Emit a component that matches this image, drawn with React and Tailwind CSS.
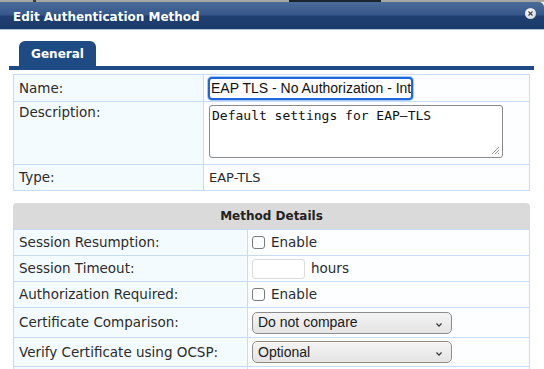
import React from "react";

function Checkbox() {
  return <span className="inline-block w-[13px] h-[13px] border border-[#7a7a7a] rounded-[3px] bg-white" />;
}

function Chevron() {
  return (
    <svg width="8" height="6" viewBox="0 0 8 6" className="absolute right-[8px] top-[9px]">
      <path d="M1.5 1.5 L4 4.2 L6.5 1.5" fill="none" stroke="#333" strokeWidth="1.2" />
    </svg>
  );
}

function Select({ value }) {
  return (
    <div className="relative w-[200px] h-[22px] rounded-[5px] border border-[#8d8d8d] bg-[linear-gradient(to_bottom,#f4f4f4,#e4e4e4)] flex items-center pl-[5px] font-['Liberation_Sans',sans-serif] text-[14px] text-[#1a1a1a]">
      {value}
      <Chevron />
    </div>
  );
}

function MRow({ label, h, last, children }) {
  return (
    <div className={`flex ${h} ${last ? "" : "border-b"} border-[#c6dcf5]`}>
      <div className="w-[234px] shrink-0 border-r border-[#c6dcf5] bg-[#f4fbff] flex items-center pl-[5px]">{label}</div>
      <div className="flex-1 bg-[#fcfeff] flex items-center pl-[4px] gap-[6px]">{children}</div>
    </div>
  );
}

export default function App() {
  return (
    <div className="w-[544px] h-[369px] overflow-hidden bg-white font-['DejaVu_Sans',sans-serif] text-[13.5px] text-[#2b2b2b]">
      <div className="h-[2px] bg-[#a6a6a6] flex">
        <div className="ml-[33px] w-[3px] bg-[#3a3a3a]" />
        <div className="ml-[253px] w-[92px] bg-[#1b2532]" />
      </div>
      <div className="relative h-[27px] rounded-tr-[5px] flex items-center pl-[13px] pt-[3px] bg-[linear-gradient(to_bottom,#4b6b98_0%,#35578a_48%,#1e3f70_52%,#1b3b6a_100%)]">
        <span className="text-white font-bold text-[12px] leading-none">Edit Authentication Method</span>
        <span className="absolute left-[525px] top-[6px] w-[11px] h-[11px] rounded-full bg-[radial-gradient(circle_at_40%_35%,#ffffff,#c9ced6)] flex items-center justify-center">
          <svg width="5" height="5" viewBox="0 0 5 5">
            <path d="M0.5 0.5 L4.5 4.5 M4.5 0.5 L0.5 4.5" stroke="#444" strokeWidth="1.3" />
          </svg>
        </span>
      </div>
      <div className="h-[1px] bg-[#b2c3d9]" />

      <div className="mt-[11px] ml-[9px] w-[525px]">
        <div className="ml-[10px] w-[77px] h-[25px] rounded-t-[6px] bg-[#1f4b85] flex items-center justify-center text-white font-bold text-[12px] pt-[1px]">
          General
        </div>
        <div className="h-[4px] bg-[#1f4b85]" />
      </div>

      <div className="mt-[4px] ml-[13px] w-[517px] border border-[#c6dcf5]">
        <div className="flex h-[27px] border-b border-[#c6dcf5]">
          <div className="w-[190px] shrink-0 border-r border-[#c6dcf5] bg-[#f4fbff] flex items-center pl-[5px]">Name:</div>
          <div className="flex-1 bg-[#fcfeff] flex items-center pl-[4px]">
            <div className="w-[205px] h-[23px] rounded-[4px] border-2 border-[#1d66dc] shadow-[0_0_0_1px_#a9c8f3] bg-white flex items-center pl-[1px] overflow-hidden whitespace-nowrap font-['Liberation_Sans',sans-serif] text-[14px] text-[#111]">
              EAP TLS - No Authorization - Int
            </div>
          </div>
        </div>
        <div className="flex h-[63px] border-b border-[#c6dcf5]">
          <div className="w-[190px] shrink-0 border-r border-[#c6dcf5] bg-[#f4fbff] pl-[5px] pt-[3px] leading-[15px]">Description:</div>
          <div className="flex-1 bg-[#fcfeff] pl-[5px] pt-[3px]">
            <div className="relative w-[294px] h-[53px] rounded-[3px] border border-[#8a8a8a] bg-white pl-[2px] pt-[2px] font-['DejaVu_Sans_Mono',monospace] text-[13px] leading-[16px] text-[#111]">
              Default settings for EAP–TLS
              <svg width="9" height="9" viewBox="0 0 9 9" className="absolute right-[2px] bottom-[2px]">
                <path d="M8 1 L1 8 M8 4 L4 8 M8 7 L7 8" stroke="#888" strokeWidth="0.9" />
              </svg>
            </div>
          </div>
        </div>
        <div className="flex h-[25px]">
          <div className="w-[190px] shrink-0 border-r border-[#c6dcf5] bg-[#f4fbff] flex items-center pl-[5px]">Type:</div>
          <div className="flex-1 bg-[#fcfeff] flex items-center pl-[5px] text-[13px]">EAP-TLS</div>
        </div>
      </div>

      <div className="mt-[12px] ml-[13px] w-[517px]">
        <div className="h-[27px] rounded-t-[4px] bg-[#dadada] flex items-center justify-center font-bold text-[12px] text-[#222] border-b border-[#c6dcf5]">
          Method Details
        </div>
        <div className="border-x border-[#c6dcf5]">
          <MRow label="Session Resumption:" h="h-[26px]">
            <Checkbox />
            <span>Enable</span>
          </MRow>
          <MRow label="Session Timeout:" h="h-[26px]">
            <span className="inline-block w-[53px] h-[20px] rounded-[3px] border border-[#dcdcdc] bg-white" />
            <span>hours</span>
          </MRow>
          <MRow label="Authorization Required:" h="h-[26px]">
            <Checkbox />
            <span>Enable</span>
          </MRow>
          <MRow label="Certificate Comparison:" h="h-[30px]">
            <Select value="Do not compare" />
          </MRow>
          <MRow label="Verify Certificate using OCSP:" h="h-[29px]">
            <Select value="Optional" />
          </MRow>
          <MRow label="" h="h-[26px]" last />
        </div>
      </div>
    </div>
  );
}
